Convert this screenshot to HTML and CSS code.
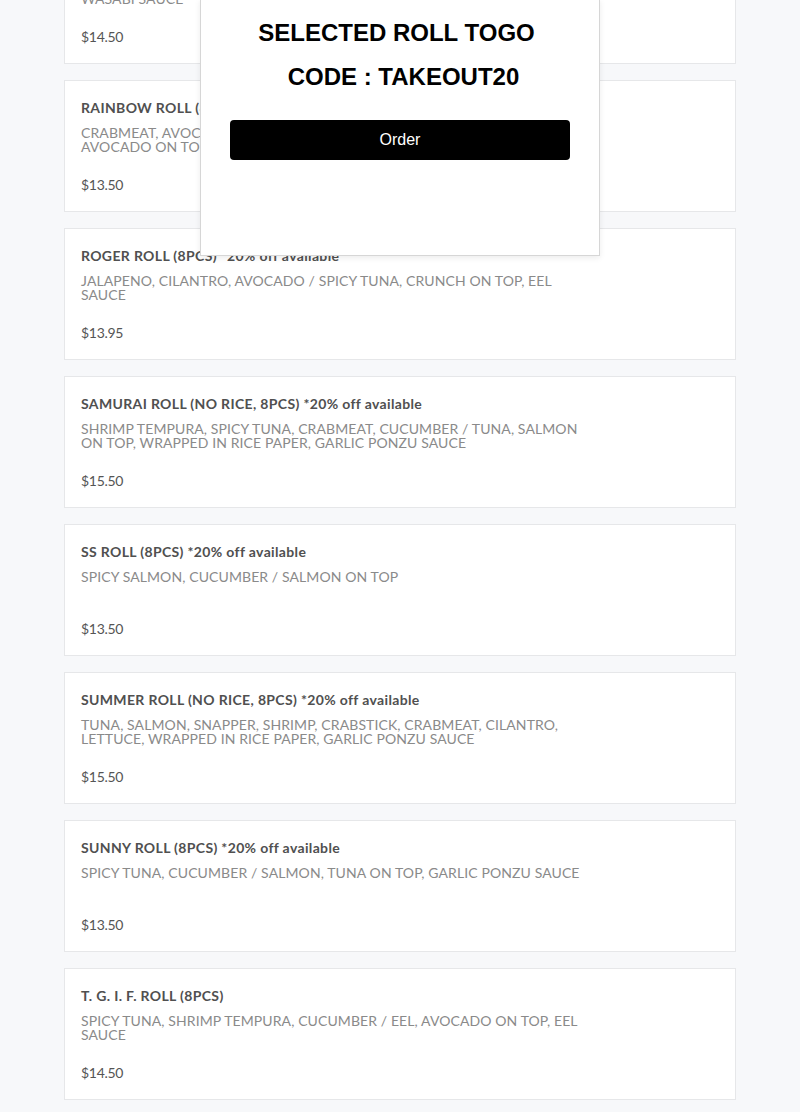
FILE: index.html
```html
<!DOCTYPE html>
<html lang="en">
<head>
<meta charset="utf-8">
<title>Menu</title>
<link rel="stylesheet" href="styles.css">
</head>
<body>
<main class="menu">
  <div class="item">
    <div class="item-title">VOLCANO ROLL (8PCS) *20% off available</div>
    <div class="item-desc">SHRIMP TEMPURA, CUCUMBER / SPICY TUNA, AVOCADO ON TOP,<br>WASABI SAUCE</div>
    <div class="item-price">$14.50</div>
  </div>
  <div class="item">
    <div class="item-title">RAINBOW ROLL (8PCS) *20% off available</div>
    <div class="item-desc">CRABMEAT, AVOCADO, CUCUMBER / TUNA, SALMON, YELLOWTAIL, SHRIMP, AVOCADO ON TOP</div>
    <div class="item-price">$13.50</div>
  </div>
  <div class="item">
    <div class="item-title">ROGER ROLL (8PCS) *20% off available</div>
    <div class="item-desc">JALAPENO, CILANTRO, AVOCADO / SPICY TUNA, CRUNCH ON TOP, EEL SAUCE</div>
    <div class="item-price">$13.95</div>
  </div>
  <div class="item">
    <div class="item-title">SAMURAI ROLL (NO RICE, 8PCS) *20% off available</div>
    <div class="item-desc">SHRIMP TEMPURA, SPICY TUNA, CRABMEAT, CUCUMBER / TUNA, SALMON ON TOP, WRAPPED IN RICE PAPER, GARLIC PONZU SAUCE</div>
    <div class="item-price">$15.50</div>
  </div>
  <div class="item">
    <div class="item-title">SS ROLL (8PCS) *20% off available</div>
    <div class="item-desc">SPICY SALMON, CUCUMBER / SALMON ON TOP</div>
    <div class="item-price">$13.50</div>
  </div>
  <div class="item">
    <div class="item-title">SUMMER ROLL (NO RICE, 8PCS) *20% off available</div>
    <div class="item-desc">TUNA, SALMON, SNAPPER, SHRIMP, CRABSTICK, CRABMEAT, CILANTRO, LETTUCE, WRAPPED IN RICE PAPER, GARLIC PONZU SAUCE</div>
    <div class="item-price">$15.50</div>
  </div>
  <div class="item">
    <div class="item-title">SUNNY ROLL (8PCS) *20% off available</div>
    <div class="item-desc">SPICY TUNA, CUCUMBER / SALMON, TUNA ON TOP, GARLIC PONZU SAUCE</div>
    <div class="item-price">$13.50</div>
  </div>
  <div class="item">
    <div class="item-title">T. G. I. F. ROLL (8PCS)</div>
    <div class="item-desc">SPICY TUNA, SHRIMP TEMPURA, CUCUMBER / EEL, AVOCADO ON TOP, EEL SAUCE</div>
    <div class="item-price">$14.50</div>
  </div>
</main>

<div class="modal">
  <h2 class="modal-title first">SELECTED ROLL TOGO</h2>
  <h2 class="modal-title second">CODE : TAKEOUT20</h2>
  <button class="order-btn" type="button">Order</button>
</div>
</body>
</html>
```

FILE: styles.css
```css
html, body {
  margin: 0;
  padding: 0;
  background: #f7f8fa;
  overflow: hidden;
}

body {
  font-family: Lato, "Open Sans", sans-serif;
  height: 1112px;
  position: relative;
}

.menu {
  width: 672px;
  margin: -68px auto 0;
  display: flex;
  flex-direction: column;
  gap: 16px;
}

.item {
  background: #fff;
  border: 1px solid #e6e7e9;
  padding: 17px 16px 16px;
  height: 132px;
  box-sizing: border-box;
  display: flex;
  flex-direction: column;
}

.item-title {
  font-size: 14px;
  line-height: 20px;
  font-weight: 700;
  color: #505050;
  letter-spacing: 0.35px;
}

.item-desc {
  margin-top: 8px;
  width: 510px;
  font-size: 14px;
  line-height: 14px;
  min-height: 28px;
  color: #8a8a8a;
  font-weight: 400;
  letter-spacing: 0.1px;
}

.item-price {
  margin-top: 21px;
  font-size: 14px;
  line-height: 20px;
  color: #555;
  letter-spacing: -0.3px;
}

.modal {
  position: absolute;
  top: -1px;
  left: 200px;
  width: 400px;
  height: 257px;
  box-sizing: border-box;
  background: #fff;
  border: 1px solid #d6d6d6;
  box-shadow: 0 2px 6px rgba(0, 0, 0, 0.08);
  padding: 19px 29px 0;
  display: flex;
  flex-direction: column;
  align-items: center;
  font-family: "Liberation Sans", Arial, sans-serif;
}

.modal-title {
  margin: 0;
  font-size: 24px;
  line-height: 28px;
  font-weight: 700;
  color: #000;
  text-align: center;
}

.modal-title.first {
  padding-right: 7px;
}

.modal-title.second {
  margin-top: 16px;
  padding-left: 7px;
}

.order-btn {
  margin-top: 29px;
  width: 340px;
  height: 40px;
  background: #000;
  color: #fff;
  border: none;
  border-radius: 4px;
  font-family: "Liberation Sans", Arial, sans-serif;
  font-size: 16px;
  cursor: pointer;
}
```
